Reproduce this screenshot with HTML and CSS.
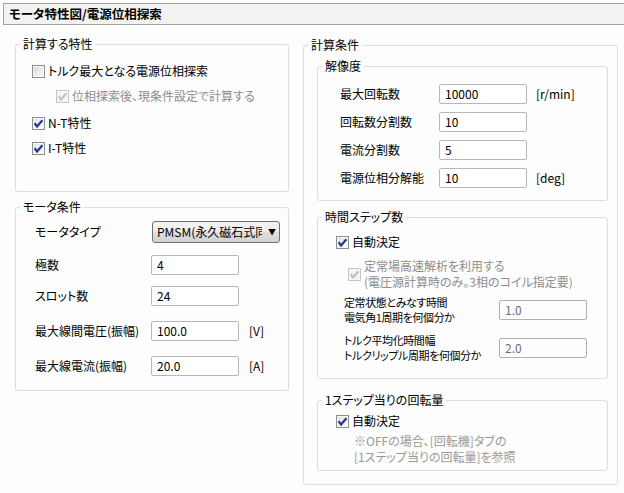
FILE: index.html
```html
<!DOCTYPE html>
<html lang="ja">
<head>
<meta charset="utf-8">
<link rel="stylesheet" href="styles.css">
</head>
<body>
<div class="titlebar">モータ特性図/電源位相探索</div>
<div class="columns">
  <div class="col-left">
    <fieldset class="grp g-calc">
      <legend>計算する特性</legend>
      <div class="body">
        <div class="cbrow r1">
          <span class="cb"></span><span>トルク最大となる電源位相探索</span>
        </div>
        <div class="cbrow r2 sub dis">
          <span class="cb checked disabled"><svg viewBox="0 0 13 13" width="13" height="13"><path d="M2.6 6.2 L5.1 9.4 L10.4 3.2" fill="none" stroke="#c2c2c2" stroke-width="2.2"/></svg></span><span>位相探索後、現条件設定で計算する</span>
        </div>
        <div class="cbrow r3">
          <span class="cb checked"><svg viewBox="0 0 13 13" width="13" height="13"><path d="M2.6 6.2 L5.1 9.4 L10.4 3.2" fill="none" stroke="#23379c" stroke-width="2.2"/></svg></span><span>N-T特性</span>
        </div>
        <div class="cbrow r4">
          <span class="cb checked"><svg viewBox="0 0 13 13" width="13" height="13"><path d="M2.6 6.2 L5.1 9.4 L10.4 3.2" fill="none" stroke="#23379c" stroke-width="2.2"/></svg></span><span>I-T特性</span>
        </div>
      </div>
    </fieldset>

    <fieldset class="grp g-motor">
      <legend>モータ条件</legend>
      <div class="body">
        <div class="frow m1">
          <span class="lbl">モータタイプ</span>
          <div class="select"><span class="seltext">PMSM(永久磁石式同</span><span class="arrow">▼</span></div>
        </div>
        <div class="frow m2">
          <span class="lbl">極数</span>
          <span class="input">4</span>
        </div>
        <div class="frow m3">
          <span class="lbl">スロット数</span>
          <span class="input">24</span>
        </div>
        <div class="frow m4">
          <span class="lbl">最大線間電圧(振幅)</span>
          <span class="input">100.0</span>
          <span class="unit">[V]</span>
        </div>
        <div class="frow m5">
          <span class="lbl">最大線電流(振幅)</span>
          <span class="input">20.0</span>
          <span class="unit">[A]</span>
        </div>
      </div>
    </fieldset>
  </div>

  <div class="col-right">
    <fieldset class="grp g-outer">
      <legend>計算条件</legend>
      <div class="body">
        <fieldset class="grp g-res">
          <legend>解像度</legend>
          <div class="body">
            <div class="rrow">
              <span class="rlbl">最大回転数</span>
              <span class="input">10000</span>
              <span class="unit">[r/min]</span>
            </div>
            <div class="rrow">
              <span class="rlbl">回転数分割数</span>
              <span class="input">10</span>
            </div>
            <div class="rrow">
              <span class="rlbl">電流分割数</span>
              <span class="input">5</span>
            </div>
            <div class="rrow">
              <span class="rlbl">電源位相分解能</span>
              <span class="input">10</span>
              <span class="unit">[deg]</span>
            </div>
          </div>
        </fieldset>

        <fieldset class="grp g-time">
          <legend>時間ステップ数</legend>
          <div class="body">
            <div class="cbrow t1">
              <span class="cb checked"><svg viewBox="0 0 13 13" width="13" height="13"><path d="M2.6 6.2 L5.1 9.4 L10.4 3.2" fill="none" stroke="#23379c" stroke-width="2.2"/></svg></span><span>自動決定</span>
            </div>
            <div class="cbrow t2 dis">
              <span class="cb checked disabled"><svg viewBox="0 0 13 13" width="13" height="13"><path d="M2.6 6.2 L5.1 9.4 L10.4 3.2" fill="none" stroke="#c2c2c2" stroke-width="2.2"/></svg></span><span class="two"><span class="ln">定常場高速解析を利用する</span><span class="ln">(電圧源計算時のみ。3相のコイル指定要)</span></span>
            </div>
            <div class="trow t3">
              <span class="tlbl"><span class="ln">定常状態とみなす時間</span><span class="ln">電気角1周期を何個分か</span></span>
              <span class="input disabled">1.0</span>
            </div>
            <div class="trow t4">
              <span class="tlbl"><span class="ln">トルク平均化時間幅</span><span class="ln">トルクリップル周期を何個分か</span></span>
              <span class="input disabled">2.0</span>
            </div>
          </div>
        </fieldset>

        <fieldset class="grp g-step">
          <legend>1ステップ当りの回転量</legend>
          <div class="body">
            <div class="cbrow s1">
              <span class="cb checked"><svg viewBox="0 0 13 13" width="13" height="13"><path d="M2.6 6.2 L5.1 9.4 L10.4 3.2" fill="none" stroke="#23379c" stroke-width="2.2"/></svg></span><span>自動決定</span>
            </div>
            <div class="note"><span class="ln">※OFFの場合、[回転機]タブの</span><span class="ln">[1ステップ当りの回転量]を参照</span></div>
          </div>
        </fieldset>
      </div>
    </fieldset>
  </div>
</div>
</body>
</html>
```

FILE: styles.css
```css
* { box-sizing: border-box; }
html, body {
  margin: 0;
  padding: 0;
  background: #fcfdfc;
  width: 624px;
  height: 493px;
  overflow: hidden;
}
body {
  font-family: "Noto Sans CJK JP", "DejaVu Sans", sans-serif;
  font-size: 12px;
  line-height: 16px;
  color: #000;
  font-feature-settings: "palt";
}
.titlebar {
  margin: 3px 0 0 3px;
  height: 22px;
  border: 1px solid #a0a0a0;
  border-right: none;
  background: #f2f3f1;
  font-weight: bold;
  font-size: 12.5px;
  line-height: 20px;
  padding-left: 5px;
}
.columns {
  display: flex;
  padding-left: 15px;
}
.col-left { width: 274px; }
.col-right { width: 315px; margin-left: 14px; }

.grp {
  margin: 0;
  padding: 0;
  border: 1px solid #d5dfe5;
  border-radius: 3px;
  min-width: 0;
}
.grp > legend {
  margin-left: 4px;
  padding: 0 3px;
  line-height: 14px;
  font-size: 12px;
}

.ln { display: block; white-space: nowrap; }

/* left groups */
.g-calc { margin-top: 12px; }
.g-calc > .body { padding: 12px 0 35px 16px; }
.g-motor { margin-top: 8px; }
.g-motor > .body { padding: 7px 0 14px 19px; }

.cbrow {
  display: flex;
  align-items: center;
  height: 16px;
}
.cbrow .cb { margin-right: 3px; flex: none; }
.r2 { margin-top: 9px; margin-left: 24px; }
.r3 { margin-top: 11px; }
.r4 { margin-top: 9px; }
.dis { color: #8d8d8d; }

.cb {
  display: inline-block;
  width: 13px;
  height: 13px;
  border: 1px solid #8e8f8f;
  background: linear-gradient(135deg, #d6d6d3 0%, #ededeb 55%, #fbfbfb 100%);
  box-shadow: inset 0 0 0 1px #f7f7f7;
  position: relative;
}
.cb svg { position: absolute; left: -1px; top: -1px; }
.cb.checked {
  background: linear-gradient(135deg, #dedede 0%, #f1f1f1 55%, #ffffff 100%);
}
.cb.disabled {
  border-color: #c5c5c5;
  background: #f4f4f4;
}

.frow {
  display: flex;
  align-items: center;
}
.frow .lbl { width: 116px; flex: none; white-space: nowrap; }
.m1 { height: 22px; }
.m2 { margin-top: 12px; }
.m3 { margin-top: 11px; }
.m4 { margin-top: 15px; }
.m5 { margin-top: 15px; }

.select {
  width: 128px;
  height: 22px;
  margin-left: 1px;
  border: 1px solid #707070;
  border-radius: 3px;
  background: linear-gradient(#f4f4f4 0%, #ececec 48%, #dedede 52%, #d2d2d2 100%);
  display: flex;
  align-items: center;
  padding-left: 4px;
  overflow: hidden;
}
.seltext {
  width: 105px;
  overflow: hidden;
  white-space: nowrap;
  flex: none;
  line-height: 20px;
}
.arrow {
  font-size: 8px;
  margin-left: 6px;
  line-height: 20px;
}

.input {
  display: inline-block;
  width: 88px;
  height: 20px;
  border: 1px solid #b5b7bb;
  border-radius: 2px;
  background: #fff;
  padding-left: 5px;
  line-height: 18px;
  flex: none;
}
.input.disabled {
  color: #6e6e7a;
  background: #fcfdfc;
  border-color: #b0b0b0;
}
.unit { margin-left: 10px; }

/* right */
.g-outer { margin-top: 13px; }
.g-outer > .body { padding: 7px 9px 13px 13px; }
.g-res > .body { padding: 11px 0 12px 22px; }
.rrow {
  display: flex;
  align-items: center;
  height: 20px;
}
.rrow + .rrow { margin-top: 8px; }
.rlbl { width: 99px; flex: none; }
.rrow .unit { margin-left: 9px; }

.g-time { margin-top: 9px; }
.g-time > .body { padding: 10px 0 15px 18px; }
.t2 { margin-top: 8px; margin-left: 12px; height: 32px; }
.t2 .two { line-height: 16px; }
.trow {
  display: flex;
  align-items: center;
  margin-left: 8px;
}
.tlbl {
  width: 155px;
  flex: none;
  line-height: 15px;
  font-size: 11px;
  letter-spacing: -0.4px;
}
.t3 { margin-top: 5px; }
.t4 { margin-top: 8px; }

.g-step { margin-top: 14px; }
.g-step > .body { padding: 6px 0 5px 18px; }
.note {
  margin-top: 4px;
  margin-left: 18px;
  color: #9a9a9a;
  line-height: 16px;
}
```
